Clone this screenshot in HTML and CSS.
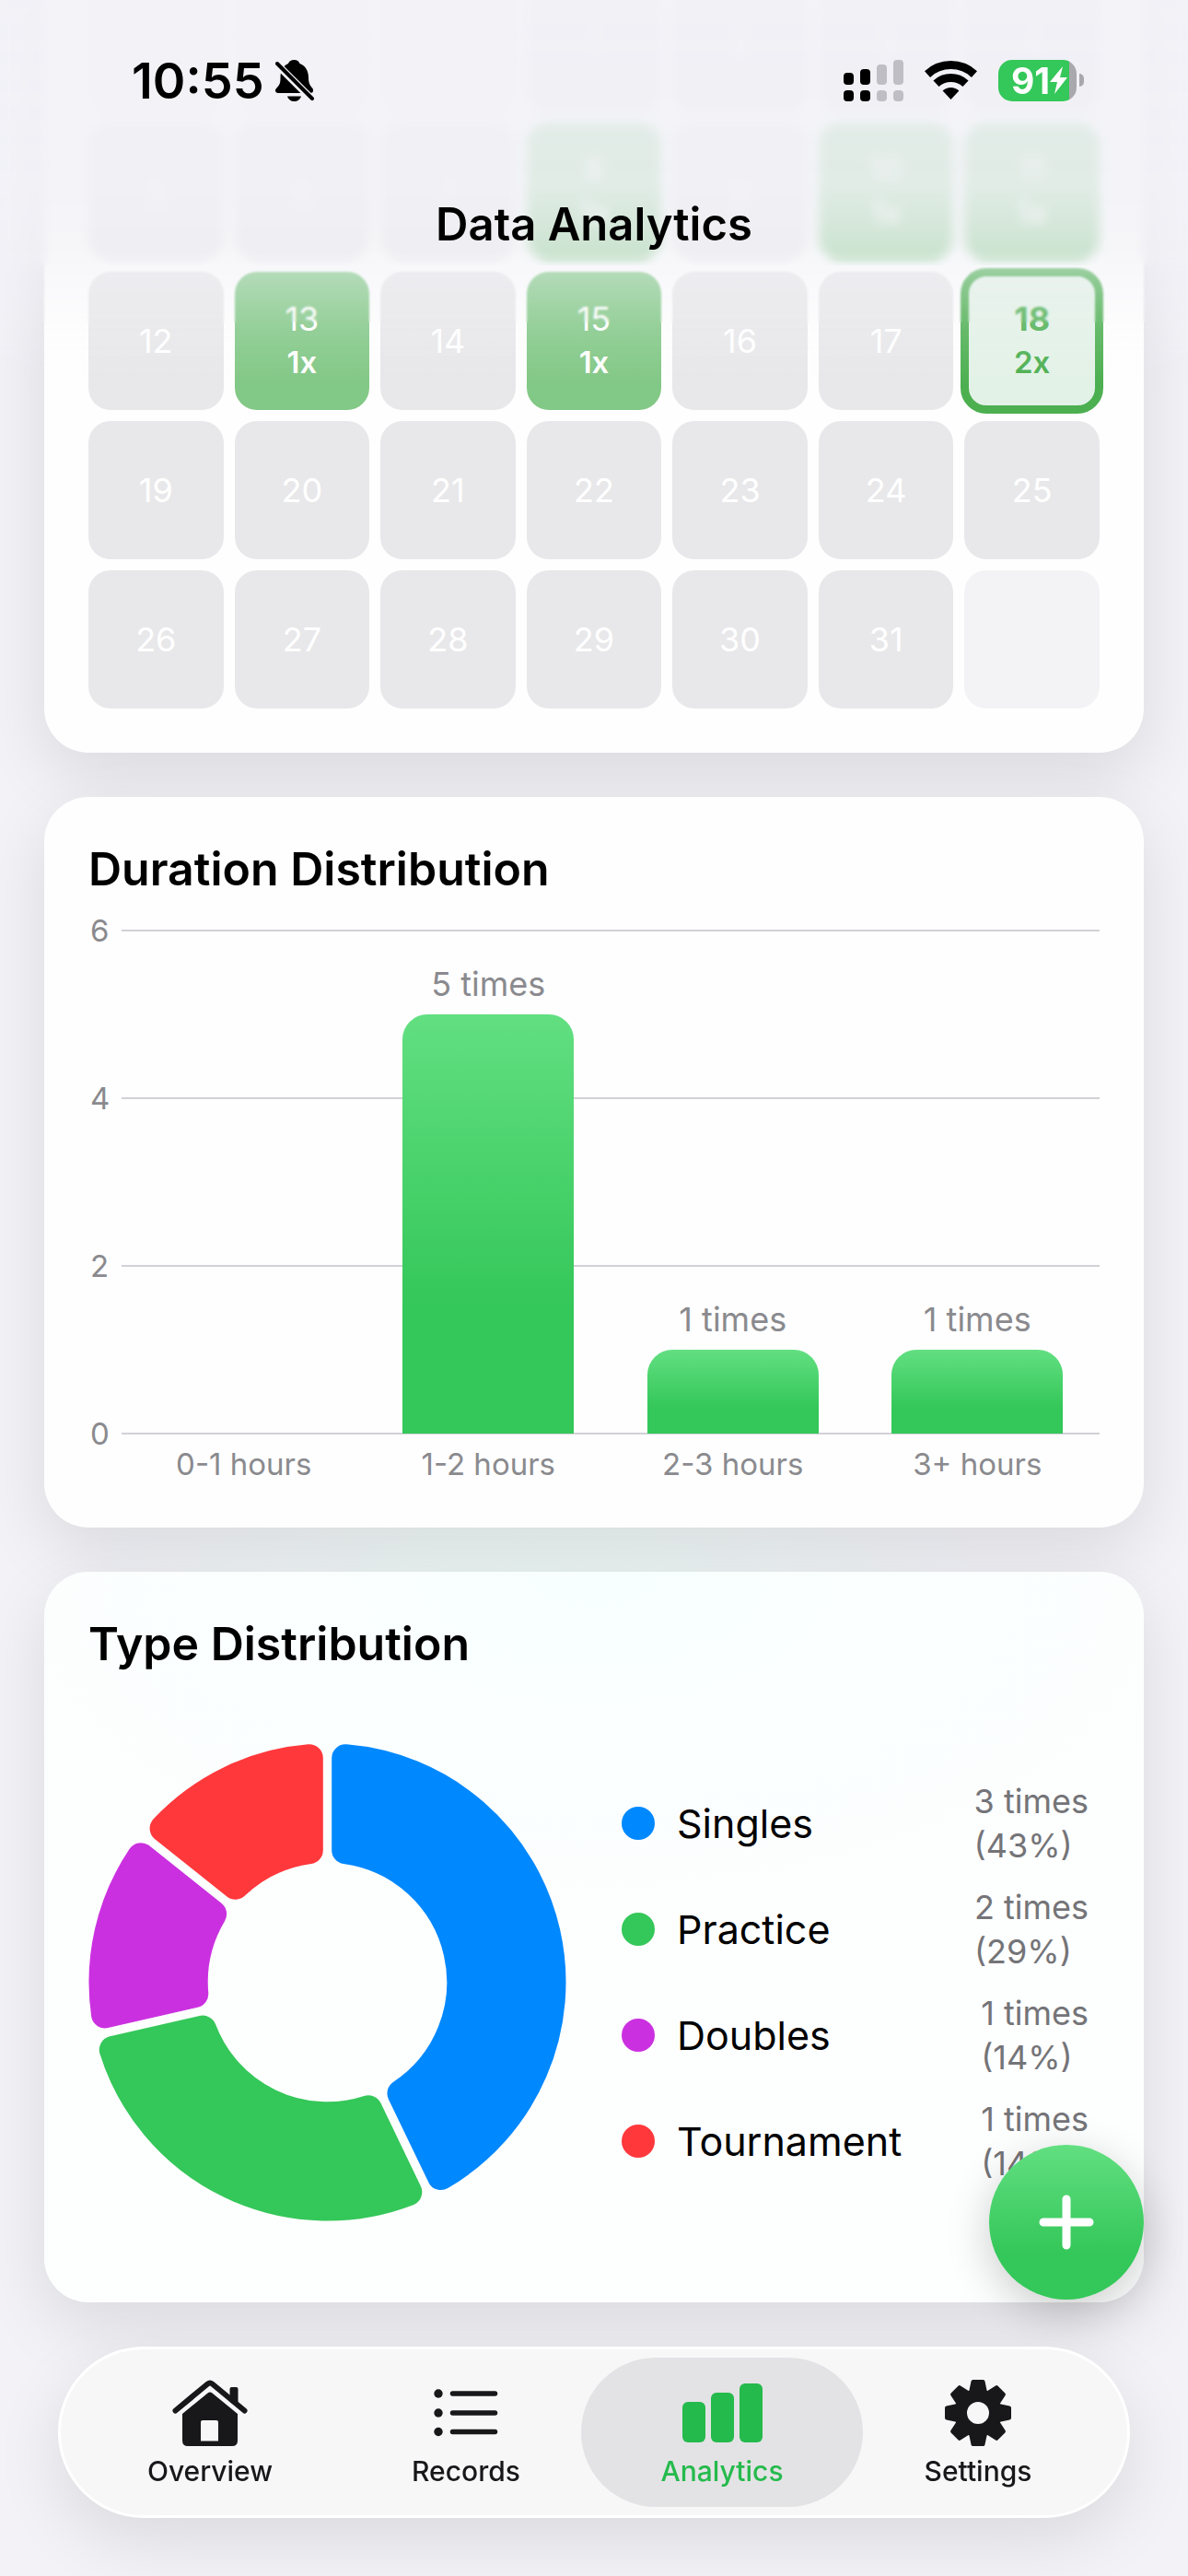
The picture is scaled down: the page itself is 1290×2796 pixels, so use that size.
FILE: index.html
```html
<!DOCTYPE html>
<html lang="en">
<head>
    <meta charset="UTF-8">
    <meta name="viewport" content="width=device-width, initial-scale=1.0">
    <title>Data Analytics</title>
    <link rel="stylesheet" href="styles.css">
</head>
<body>

<header class="top-bar">
    <div class="status">
        <span class="time">10:55</span>
        <svg class="bell" viewBox="0 0 42 45" width="42" height="45">
            <path d="M20.500 0c3 0 5 1.500 6 4c6 2 9.500 8 9.500 15c0 7 2 9 4.500 12c1.500 3 0 5-2.500 5H3c-3 0-4-3-2-5C5 27 5.500 25 5.500 19c0-7 3-13 8.500-15c1-2.500 3-4 6.500-4z"/>
            <path d="M13 39.500h15c-1 3.500-4 5.500-7.500 5.500s-6.500-2-7.500-5.500z"/>
            <path d="M0 3l41 41" stroke="#f2f2f7" stroke-width="8"/>
            <path d="M2 4l38 38" stroke="#000" stroke-width="4" stroke-linecap="round"/>
        </svg>
        <svg class="signal" viewBox="0 0 65 45" width="65" height="45">
            <rect x="0" y="14" width="11" height="13" rx="4"/>
            <rect x="18" y="10" width="11" height="17" rx="4"/>
            <rect class="off" x="36" y="5" width="11" height="22" rx="4"/>
            <rect class="off" x="54" y="0" width="11" height="27" rx="4"/>
            <rect x="0" y="33" width="11" height="12" rx="4"/>
            <rect x="18" y="33" width="11" height="12" rx="4"/>
            <rect class="off" x="36" y="33" width="11" height="12" rx="4"/>
            <rect class="off" x="54" y="33" width="11" height="12" rx="4"/>
        </svg>
        <svg class="wifi" viewBox="0 0 57 42" width="57" height="42">
            <path d="M3 14.600A37.500 37.500 0 0 1 54 14.600" fill="none" stroke="#000" stroke-width="9"/>
            <path d="M12.500 24.800A23.500 23.500 0 0 1 44.500 24.800" fill="none" stroke="#000" stroke-width="9"/>
            <path d="M28.500 42L19.600 32.500A13 13 0 0 1 37.400 32.500z"/>
        </svg>
        <div class="battery">
            <span>91</span>
            <svg viewBox="0 0 19 30" width="19" height="30"><path d="M14 0L0 17h8L5 30L19 12h-8z" fill="#fff"/></svg>
        </div>
        <i class="battery-tip"></i>
    </div>
    <h1>Data Analytics</h1>
</header>

<main>
    <!-- Calendar -->
    <section class="card calendar">
        <div class="days">
            <div class="day empty"></div>
            <div class="day empty"></div>
            <div class="day empty"></div>
            <div class="day">1</div>
            <div class="day">2</div>
            <div class="day">3</div>
            <div class="day">4</div>
            <div class="day">5</div>
            <div class="day">6</div>
            <div class="day">7</div>
            <div class="day played">8<b>1x</b></div>
            <div class="day">9</div>
            <div class="day played">10<b>1x</b></div>
            <div class="day played">11<b>1x</b></div>
            <div class="day">12</div>
            <div class="day played">13<b>1x</b></div>
            <div class="day">14</div>
            <div class="day played">15<b>1x</b></div>
            <div class="day">16</div>
            <div class="day">17</div>
            <div class="day today">18<b>2x</b></div>
            <div class="day">19</div>
            <div class="day">20</div>
            <div class="day">21</div>
            <div class="day">22</div>
            <div class="day">23</div>
            <div class="day">24</div>
            <div class="day">25</div>
            <div class="day">26</div>
            <div class="day">27</div>
            <div class="day">28</div>
            <div class="day">29</div>
            <div class="day">30</div>
            <div class="day">31</div>
            <div class="day empty"></div>
        </div>
    </section>

    <!-- Duration chart -->
    <section class="card">
        <h2>Duration Distribution</h2>
        <div class="chart">
            <div class="y-axis">
                <span>6</span>
                <span>4</span>
                <span>2</span>
                <span>0</span>
            </div>
            <div class="plot">
                <div class="column"></div>
                <div class="column"><span>5 times</span><div class="bar" style="height: 83.33%"></div></div>
                <div class="column"><span>1 times</span><div class="bar" style="height: 16.67%"></div></div>
                <div class="column"><span>1 times</span><div class="bar" style="height: 16.67%"></div></div>
            </div>
            <div class="x-axis">
                <span>0-1 hours</span>
                <span>1-2 hours</span>
                <span>2-3 hours</span>
                <span>3+ hours</span>
            </div>
        </div>
    </section>

    <!-- Type chart -->
    <section class="card types">
        <h2>Type Distribution</h2>
        <div class="type-body">
            <svg class="donut" viewBox="-260 -260 520 520">
                <path class="singles" d="M19.700-243.700A244.500 244.500 0 0 1 123.490 211.020L80.080 120.880A145 145 0 0 0 19.700-143.650z"/>
                <path class="practice" d="M87.990 228.120A244.500 244.500 0 0 1-233.220 73.440L-135.670 51.180A145 145 0 0 0 44.580 137.980z"/>
                <path class="doubles" d="M-241.980 35.020A244.500 244.500 0 0 1-202.820-136.550L-124.590-74.170A145 145 0 0 0-144.430 12.760z"/>
                <path class="tournament" d="M-178.260-167.350A244.500 244.500 0 0 1-19.700-243.700L-19.700-143.650A145 145 0 0 0-100.030-104.970z"/>
            </svg>
            <ul class="legend">
                <li><i class="dot singles"></i><span>Singles</span><small>3 times<br>(43%)</small></li>
                <li><i class="dot practice"></i><span>Practice</span><small>2 times<br>(29%)</small></li>
                <li><i class="dot doubles"></i><span>Doubles</span><small>1 times<br>(14%)</small></li>
                <li><i class="dot tournament"></i><span>Tournament</span><small>1 times<br>(14%)</small></li>
            </ul>
        </div>
    </section>
</main>

<button class="add-button" aria-label="Add record">
    <svg viewBox="0 0 60 60" width="60" height="60"><path d="M30 5v50M5 30h50" stroke="#fff" stroke-width="9" stroke-linecap="round"/></svg>
</button>

<nav class="tab-bar">
    <a href="#overview" class="tab">
        <svg viewBox="0 0 82 72" width="82" height="72">
            <path d="M62.500 24V10q0-2 2-2h5q2 0 2 2V30z"/>
            <path d="M3.500 33.500L38.500 4.500q2.500-2 5 0L78.500 33.500" fill="none" stroke="#18181a" stroke-width="6" stroke-linecap="round"/>
            <path fill-rule="evenodd" d="M11 37L38.500 14.500q2.500-2 5 0L71 37V66q0 6-6 6H17q-6 0-6-6zM33 44q-2 0-2 2V66.500H50V46q0-2-2-2z"/>
        </svg>
        <span>Overview</span>
    </a>
    <a href="#records" class="tab">
        <svg viewBox="0 0 70 72" width="70" height="72">
            <circle cx="5" cy="15" r="4.700"/>
            <circle cx="5" cy="36" r="4.700"/>
            <circle cx="5" cy="56.500" r="4.700"/>
            <path d="M20.500 15H66.500M20.500 36H66.500M20.500 56.500H66.500" stroke="#18181a" stroke-width="5.500" stroke-linecap="round"/>
        </svg>
        <span>Records</span>
    </a>
    <a href="#analytics" class="tab active">
        <svg viewBox="0 0 87 72" width="87" height="72">
            <rect x="0" y="24" width="25" height="44" rx="6"/>
            <rect x="31" y="14" width="25" height="54" rx="6"/>
            <rect x="62" y="4" width="25" height="64" rx="6"/>
        </svg>
        <span>Analytics</span>
    </a>
    <a href="#settings" class="tab">
        <svg viewBox="-36 -36 72 72" width="72" height="72">
            <circle r="19" fill="none" stroke="#18181a" stroke-width="14"/>
            <g stroke="#18181a" stroke-width="4" stroke-linejoin="round">
                <path id="tooth" d="M-8-22L-5.500-34H5.500L8-22z"/>
                <use href="#tooth" transform="rotate(45)"/>
                <use href="#tooth" transform="rotate(90)"/>
                <use href="#tooth" transform="rotate(135)"/>
                <use href="#tooth" transform="rotate(180)"/>
                <use href="#tooth" transform="rotate(225)"/>
                <use href="#tooth" transform="rotate(270)"/>
                <use href="#tooth" transform="rotate(315)"/>
            </g>
        </svg>
        <span>Settings</span>
    </a>
</nav>

</body>
</html>
```

FILE: styles.css
```css
* {
    box-sizing: border-box;
}
body {
    margin: 0;
    min-height: 100vh;
    font-family: Inter, "Liberation Sans", sans-serif;
    color: #000;
    background: radial-gradient(circle 480px at 45% 1750px, #ecf7f5, #f2f2f7);
    overflow-x: hidden;
}
h1, h2 {
    margin: 0;
    font-size: 50px;
    font-weight: 600;
    line-height: 60px;
}

/* Status bar and title, content fades out below them */
.top-bar {
    position: fixed;
    top: 0;
    left: 0;
    right: 0;
    height: 420px;
    padding-top: 63px;
    z-index: 2;
    pointer-events: none;
    background: linear-gradient(rgba(242, 242, 247, 0.88) 0, rgba(242, 242, 247, 0.85) 200px, rgba(242, 242, 247, 0.66) 275px, rgba(243, 243, 249, 0.42) 300px, rgba(248, 248, 252, 0.15) 360px, rgba(255, 255, 255, 0) 420px);
}
.top-bar::before, .top-bar::after {
    content: "";
    position: absolute;
    top: 0;
    left: 0;
    right: 0;
    z-index: -1;
}
.top-bar::before {
    height: 350px;
    backdrop-filter: blur(1px);
}
.top-bar::after {
    height: 288px;
    backdrop-filter: blur(6px);
}
.status {
    display: flex;
    align-items: center;
    height: 48px;
    padding: 0 113px 0 143px;
}
.time {
    font-size: 54px;
    font-weight: 600;
}
.bell {
    margin-left: 12px;
}
.signal {
    margin-left: auto;
}
.signal .off {
    fill: #bfbec4;
}
.wifi {
    margin: 0 23px;
}
.battery {
    display: flex;
    align-items: center;
    justify-content: center;
    width: 85px;
    height: 45px;
    padding-left: 4px;
    border-radius: 15px;
    color: #fff;
    font-size: 39px;
    font-weight: 700;
    background: linear-gradient(to right, #34c759 91%, #a9a9ad 91%);
}
.battery-tip {
    width: 5px;
    height: 14px;
    margin-left: 3px;
    border-radius: 0 6px 6px 0;
    background: #a9a9ad;
}
h1 {
    margin-top: 103px;
    font-size: 49px;
    text-align: center;
}

/* Cards */
main {
    display: flex;
    flex-direction: column;
    gap: 48px;
    padding: 0 48px 280px;
}
.card {
    padding: 48px;
    border-radius: 48px;
    background: #fefefe;
    box-shadow: 0 24px 72px rgba(0, 0, 0, 0.1);
}

/* Calendar */
.calendar {
    margin-top: -77px;
}
.days {
    display: grid;
    grid-template-columns: repeat(7, 1fr);
    grid-auto-rows: 150px;
    gap: 12px;
}
.day {
    display: flex;
    flex-direction: column;
    align-items: center;
    justify-content: center;
    border-radius: 24px;
    background: #e8e8ea;
    color: #fff;
    font-size: 36px;
    line-height: 47px;
}
.day b {
    font-size: 33px;
    font-weight: 600;
}
.empty {
    background: #f3f3f5;
}
.played {
    background: #82c886;
}
.today {
    outline: 9px solid #4caf50;
    outline-offset: -5px;
    background: #e3f2e7;
    color: #4caf50;
    font-weight: 700;
}

/* Duration chart */
.chart {
    display: grid;
    grid-template-columns: 36px 1fr;
    margin-top: 19px;
    color: #8a8a8e;
    font-size: 33px;
}
.y-axis {
    display: flex;
    flex-direction: column;
    justify-content: space-between;
    height: 582px;
    padding-left: 2px;
    line-height: 36px;
}
.plot {
    display: grid;
    grid-template-columns: repeat(4, 1fr);
    height: 548px;
    margin-top: 17px;
    padding: 1px 0;
    background: repeating-linear-gradient(#d1d1d6 0 2px, transparent 2px 182px);
}
.column {
    display: flex;
    flex-direction: column;
    align-items: center;
    justify-content: flex-end;
    font-size: 36px;
    line-height: 42px;
}
.column span {
    margin-bottom: 12px;
}
.bar {
    flex-shrink: 0;
    width: 70%;
    border-radius: 27px 27px 0 0;
    background: linear-gradient(#62df81, #34c759 70%);
}
.x-axis {
    grid-column: 2;
    display: grid;
    grid-template-columns: repeat(4, 1fr);
    margin-top: -6px;
    line-height: 42px;
    text-align: center;
}

/* Type chart */
.types {
    background: radial-gradient(ellipse 60% 50% at 50% 0, #f8ffff, #fdfefe);
}
.type-body {
    display: flex;
    align-items: center;
    gap: 60px;
    padding: 78px 0 40px;
}
.donut {
    flex: 0 1 519px;
    min-width: 0;
}
.donut path {
    stroke-width: 30px;
    stroke-linejoin: round;
}
.donut .singles { fill: #0088ff; stroke: #0088ff; }
.donut .practice { fill: #34c759; stroke: #34c759; }
.donut .doubles { fill: #cb30e0; stroke: #cb30e0; }
.donut .tournament { fill: #ff383c; stroke: #ff383c; }
.legend {
    flex: 1;
    display: flex;
    flex-direction: column;
    gap: 19px;
    margin: 0;
    padding: 0 12px 0 0;
    list-style: none;
}
.legend li {
    display: flex;
    align-items: center;
    font-size: 43px;
}
.legend small {
    margin-left: auto;
    color: #747478;
    font-size: 36px;
    line-height: 48px;
}
.dot {
    width: 36px;
    height: 36px;
    margin-right: 24px;
    border-radius: 50%;
}
.dot.singles { background: #0088ff; }
.dot.practice { background: #34c759; }
.dot.doubles { background: #cb30e0; }
.dot.tournament { background: #ff383c; }

/* Add button */
.add-button {
    position: fixed;
    right: 48px;
    bottom: 300px;
    display: flex;
    align-items: center;
    justify-content: center;
    width: 168px;
    height: 168px;
    padding: 0;
    border: 0;
    border-radius: 50%;
    background: linear-gradient(#62df81, #34c759 70%);
    box-shadow: 0 12px 48px rgba(0, 0, 0, 0.2);
}

/* Tab bar */
.tab-bar {
    position: fixed;
    left: 63px;
    right: 63px;
    bottom: 63px;
    display: grid;
    grid-template-columns: repeat(4, 1fr);
    padding: 9px 23px;
    border: 3px solid #fff;
    border-radius: 93px;
    background: #f7f7f8;
    box-shadow: 0 24px 72px rgba(0, 0, 0, 0.1);
}
.tab {
    display: flex;
    flex-direction: column;
    align-items: center;
    height: 162px;
    padding-top: 24px;
    border-radius: 81px;
    color: #18181a;
    fill: #18181a;
    font-size: 30px;
    font-weight: 500;
    line-height: 36px;
    text-decoration: none;
}
.tab span {
    margin-top: 9px;
}
.active {
    margin: 0 -14px;
    background: #e3e3e5;
    color: #25ba4c;
    fill: #25ba4c;
}
```
